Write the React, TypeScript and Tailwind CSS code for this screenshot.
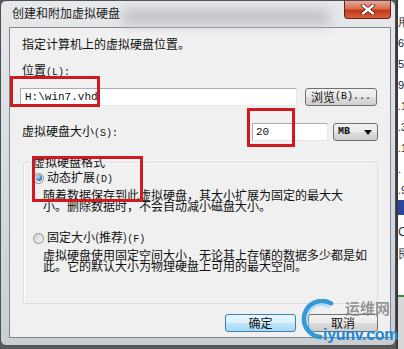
import { ReactNode } from 'react';

const cjk = "font-['Noto_Sans_CJK_SC','Noto_Sans',sans-serif]";
const mono = "font-['Liberation_Mono',monospace]";

function Radio({ checked }: { checked?: boolean }) {
  return (
    <span className="flex h-[11px] w-[11px] shrink-0 items-center justify-center rounded-full border border-[#8f8f8f] bg-[linear-gradient(135deg,#cfcfcf,#f9f9f9)]">
      {checked && (
        <span className="h-[6px] w-[6px] rounded-full bg-[radial-gradient(circle_at_35%_35%,#bfeaff,#2a7fbf_60%,#0e4a80)]" />
      )}
    </span>
  );
}

function Button({ children, primary, className }: { children: ReactNode; primary?: boolean; className?: string }) {
  return (
    <div
      className={`flex h-[18px] items-center justify-center rounded-[3px] border text-[12px] leading-none text-[#111] ${
        primary
          ? 'border-[#3c7fb1] bg-[linear-gradient(#eaf6fd_0%,#d9f0fc_50%,#bee6fd_51%,#a7d9f5_100%)]'
          : 'border-[#707070] bg-[linear-gradient(#f2f2f2_0%,#ebebeb_50%,#dddddd_51%,#cfcfcf_100%)]'
      } ${className ?? ''}`}
    >
      {children}
    </div>
  );
}

function Watermark() {
  return (
    <div className="pointer-events-none absolute left-[300px] top-[299px] h-[48px] w-[100px]">
      <svg width="46" height="44" viewBox="0 0 46 44" className="absolute left-0 top-0">
        <path d="M31 4.4 A18 18 0 1 0 20.4 37.9" fill="none" stroke="#1f8fd6" strokeWidth="4.5" strokeLinecap="round" opacity="0.9" />
        <path d="M29 8 A14 14 0 0 0 14 32" fill="none" stroke="#8fd0f2" strokeWidth="2" strokeLinecap="round" opacity="0.7" />
      </svg>
      <span className={`${cjk} absolute left-[45px] top-[1px] text-[15px] font-bold leading-none text-[#7d7d7d] opacity-80`}>
        运维网
      </span>
      <span className="absolute left-[23px] top-[28px] font-['Liberation_Sans',sans-serif] text-[16px] font-bold leading-none tracking-[-0.3px] text-[#2186d4]">
        iyunv.com
      </span>
    </div>
  );
}

function Frame() {
  return (
    <div className="relative h-[346px] w-[396px] shrink-0 rounded-[6px] border border-[#4a4f55] bg-[linear-gradient(#e6e8ea,#d5d9dd_60%,#c9ced3)]">
      <div className="pointer-events-none absolute left-[120px] top-[8px] h-[16px] w-[210px] rounded-full bg-[#c2c4c7] blur-[6px]" />
      <div className="relative flex h-[26px] items-start">
        <span className={`${cjk} ml-[11px] mt-[5px] text-[12px] leading-[14px] text-[#1a1a1a]`}>创建和附加虚拟硬盘</span>
        <div className="ml-auto mr-[4px] flex h-[18px] w-[47px] items-center justify-center rounded-b-[4px] border border-t-0 border-[#6a2115] bg-[linear-gradient(#e9a795_0%,#d6704f_45%,#c13a1c_55%,#d4603e_100%)]">
          <svg width="14" height="11" viewBox="0 0 14 11">
            <path d="M2 1.5 L12 9.5 M12 1.5 L2 9.5" stroke="#5a1a10" strokeWidth="4" strokeLinecap="round" />
            <path d="M2 1.5 L12 9.5 M12 1.5 L2 9.5" stroke="#ffffff" strokeWidth="2.4" strokeLinecap="round" />
          </svg>
        </div>
      </div>

      <div className={`${cjk} ml-[8px] flex h-[311px] w-[382px] flex-col border border-[#7d8794] bg-[#f0f0f0] text-[12px] text-[#111]`}>
        <p className="ml-[12px] mt-[9px] leading-[14px]">指定计算机上的虚拟硬盘位置。</p>
        <p className="ml-[12px] mt-[12px] leading-[14px]">
          位置<span className={`${mono} text-[10px]`}>(L):</span>
        </p>

        <div className="mt-[8px] flex h-[18px] items-center pl-[10px] pr-[13px]">
          <div className="flex h-[18px] w-[277px] items-center border border-[#abadb3] border-b-[#e3e9ef] border-r-[#e3e9ef] bg-white pl-[4px]">
            <span className={`${mono} text-[11px] leading-none`}>H:\win7.vhd</span>
          </div>
          <Button className="ml-[8px] w-[72px]">
            浏览<span className={`${mono} text-[10px]`}>(B)...</span>
          </Button>
        </div>

        <div className="mt-[17px] flex h-[18px] items-center pr-[12px]">
          <span className="ml-[12px] leading-[14px]">
            虚拟硬盘大小<span className={`${mono} text-[10px]`}>(S):</span>
          </span>
          <div className="ml-auto flex h-[18px] w-[76px] items-center border border-[#abadb3] border-b-[#e3e9ef] border-r-[#e3e9ef] bg-white pl-[3px]">
            <span className={`${mono} text-[11px] leading-none`}>20</span>
          </div>
          <div className="ml-[5px] flex h-[18px] w-[45px] items-center rounded-[3px] border border-[#707070] bg-[linear-gradient(#f2f2f2_0%,#ebebeb_50%,#dddddd_51%,#cfcfcf_100%)] pl-[4px] pr-[5px]">
            <span className={`${mono} text-[10px] font-bold leading-none`}>MB</span>
            <svg width="8" height="5" viewBox="0 0 8 5" className="ml-auto">
              <path d="M0 0 H8 L4 5 Z" fill="#111" />
            </svg>
          </div>
        </div>

        <div className="relative ml-[13px] mt-[21px] h-[142px] w-[355px] rounded-[3px] border border-[#d5dfe5] shadow-[inset_1px_1px_0_#ffffff]">
          <span className="absolute -top-[8px] left-[7px] bg-[#f0f0f0] px-[2px] leading-[14px]">虚拟硬盘格式</span>

          <div className="ml-[9px] mt-[9px] flex h-[12px] items-center gap-[3px]">
            <Radio checked />
            <span className="leading-[12px]">
              动态扩展<span className={`${mono} text-[10px]`}>(D)</span>
            </span>
          </div>
          <p className="ml-[19px] mt-[5px] leading-[11px]">
            随着数据保存到此虚拟硬盘，其大小扩展为固定的最大大
            <br />
            小。删除数据时，不会自动减小磁盘大小。
          </p>

          <div className="ml-[9px] mt-[21px] flex h-[12px] items-center gap-[3px]">
            <Radio />
            <span className="leading-[12px]">
              固定大小(推荐)<span className={`${mono} text-[10px]`}>(F)</span>
            </span>
          </div>
          <p className="ml-[19px] mt-[5px] leading-[11px]">
            虚拟硬盘使用固定空间大小，无论其上存储的数据多少都是如
            <br />
            此。它的默认大小为物理硬盘上可用的最大空间。
          </p>
        </div>

        <div className="mt-[10px] flex justify-end pr-[12px]">
          <Button primary className="w-[71px]">确定</Button>
          <Button className="ml-[12px] w-[70px]">取消</Button>
        </div>
      </div>
    </div>
  );
}

function SideStrip() {
  const cells = ['用', '6', '5', '95', '.1', '.3', '.1', '.', '.9'];
  return (
    <div className="flex h-full w-[8px] flex-col overflow-hidden border-l-[2px] border-[#3a3a3a] bg-white">
      <div className="flex h-[200px] flex-col pt-[12px] font-['Liberation_Sans',sans-serif] text-[11px] leading-[21px] text-[#222]">
        {cells.map((c, i) => (
          <span key={i} className="whitespace-nowrap">{c}</span>
        ))}
      </div>
      <div className="h-[15px] bg-[#2a46a0]" />
      <div className="flex h-[80px] flex-col pt-[6px] text-[12px] leading-[22px] text-[#333]">
        <span>C</span>
        <span>艮</span>
      </div>
      <div className="h-[2px] bg-[#3a8a3a]" />
      <div className="flex-1 bg-[#d8d8d8]" />
    </div>
  );
}

export default function App() {
  return (
    <div className="relative flex h-[349px] w-[404px] overflow-hidden bg-[#5a5a5a]">
      <Frame />
      <SideStrip />
      <div className="pointer-events-none absolute left-[10px] top-[76px] h-[31px] w-[90px] border-[3px] border-[#d11a1f]" />
      <div className="pointer-events-none absolute left-[247px] top-[108px] h-[39px] w-[48px] border-[3px] border-[#d11a1f]" />
      <div className="pointer-events-none absolute left-[32px] top-[156px] h-[46px] w-[111px] border-[3px] border-[#d11a1f]" />
      <Watermark />
    </div>
  );
}
